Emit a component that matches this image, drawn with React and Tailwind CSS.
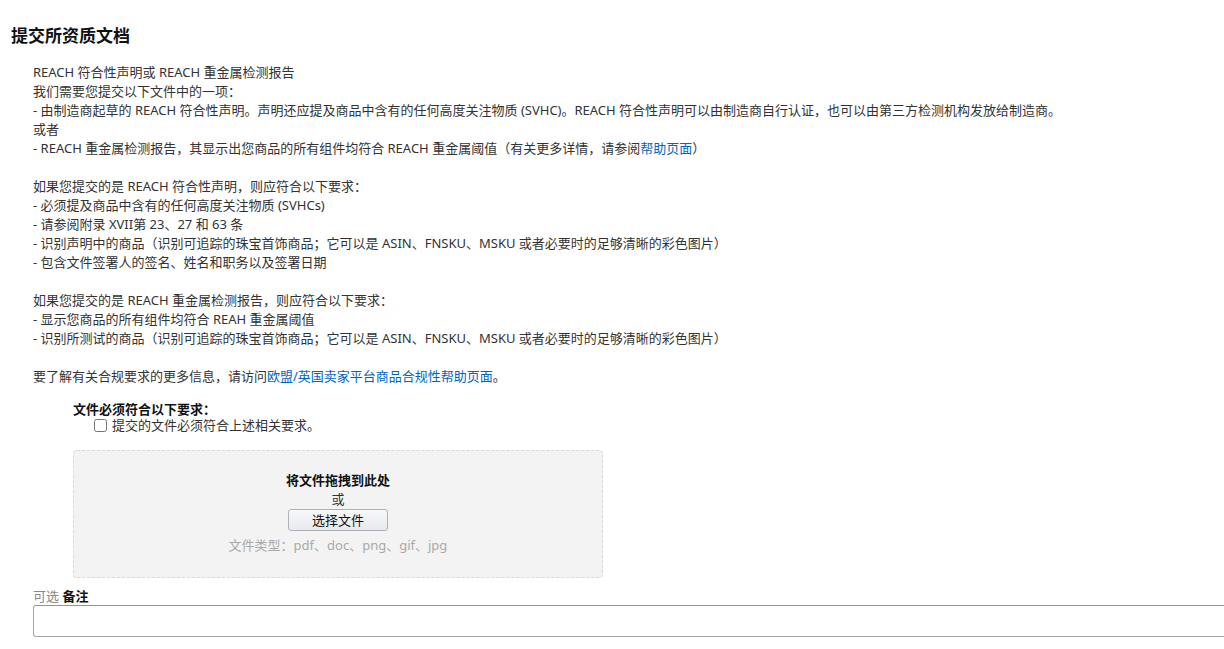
import React, { useState } from "react";

const font = { fontFamily: '"Noto Sans", "Noto Sans CJK SC", sans-serif' };

const Link = ({ children }) => (
  <a href="#" className="text-[#0066c0] hover:underline">
    {children}
  </a>
);

const App = () => {
  const [checked, setChecked] = useState(false);
  const [note, setNote] = useState("");

  return (
    <div
      className="w-[1224px] h-[649px] overflow-hidden bg-white text-[#333] px-[11px] pt-[25px]"
      style={font}
    >
      <h2 className="text-[17px] leading-[22px] font-bold text-[#111]">提交所资质文档</h2>

      <div className="ml-[22px] mt-[16px] text-[13px] leading-[19px]">
        {/* requirement text */}
        <p>REACH 符合性声明或 REACH 重金属检测报告</p>
        <p>我们需要您提交以下文件中的一项：</p>
        <p>
          - 由制造商起草的 REACH 符合性声明。声明还应提及商品中含有的任何高度关注物质 (SVHC)。REACH
          符合性声明可以由制造商自行认证，也可以由第三方检测机构发放给制造商。
        </p>
        <p>或者</p>
        <p>
          - REACH 重金属检测报告，其显示出您商品的所有组件均符合 REACH 重金属阈值（有关更多详情，请参阅
          <Link>帮助页面</Link>）
        </p>
        <p className="h-[19px]"></p>
        <p>如果您提交的是 REACH 符合性声明，则应符合以下要求：</p>
        <p>- 必须提及商品中含有的任何高度关注物质 (SVHCs)</p>
        <p>- 请参阅附录 XVII第 23、27 和 63 条</p>
        <p>- 识别声明中的商品（识别可追踪的珠宝首饰商品；它可以是 ASIN、FNSKU、MSKU 或者必要时的足够清晰的彩色图片）</p>
        <p>- 包含文件签署人的签名、姓名和职务以及签署日期</p>
        <p className="h-[19px]"></p>
        <p>如果您提交的是 REACH 重金属检测报告，则应符合以下要求：</p>
        <p>- 显示您商品的所有组件均符合 REAH 重金属阈值</p>
        <p>- 识别所测试的商品（识别可追踪的珠宝首饰商品；它可以是 ASIN、FNSKU、MSKU 或者必要时的足够清晰的彩色图片）</p>
        <p className="h-[19px]"></p>
        <p>
          要了解有关合规要求的更多信息，请访问<Link>欧盟/英国卖家平台商品合规性帮助页面</Link>。
        </p>

        {/* file requirements */}
        <div className="ml-[40px] mt-[15px] leading-[16px]">
          <p className="font-bold text-[#111]">文件必须符合以下要求：</p>
          <label className="flex items-center ml-[21px] cursor-pointer">
            <input
              type="checkbox"
              checked={checked}
              onChange={(e) => setChecked(e.target.checked)}
              className="w-[13px] h-[13px] m-0 mr-[5px]"
            />
            <span>提交的文件必须符合上述相关要求。</span>
          </label>

          {/* drop zone */}
          <div className="mt-[17px] w-[530px] h-[128px] bg-[#f3f3f3] border border-dashed border-[#d9d9d9] rounded-[4px] flex flex-col items-center pt-[20px]">
            <p className="font-bold text-[#111] leading-[19px]">将文件拖拽到此处</p>
            <p className="leading-[19px]">或</p>
            <button
              type="button"
              className="w-[100px] h-[22px] text-[13px] leading-[20px] text-[#111] border border-[#adb1b8] rounded-[3px] bg-gradient-to-b from-[#f7f8fa] to-[#e7e9ec]"
            >
              选择文件
            </button>
            <p className="mt-[5px] leading-[19px] text-[#aaa]">文件类型：pdf、doc、png、gif、jpg</p>
          </div>
        </div>

        {/* note */}
        <div className="mt-[10px]">
          <p className="leading-[16px]">
            <span className="text-[#888]">可选</span> <span className="font-bold text-[#111]">备注</span>
          </p>
          <textarea
            value={note}
            onChange={(e) => setNote(e.target.value)}
            className="block mt-[1px] w-[1220px] h-[32px] border border-[#a6a6a6] border-t-[#949494] rounded-[3px] resize-none outline-none px-2"
          />
        </div>
      </div>
    </div>
  );
};

export default App;
